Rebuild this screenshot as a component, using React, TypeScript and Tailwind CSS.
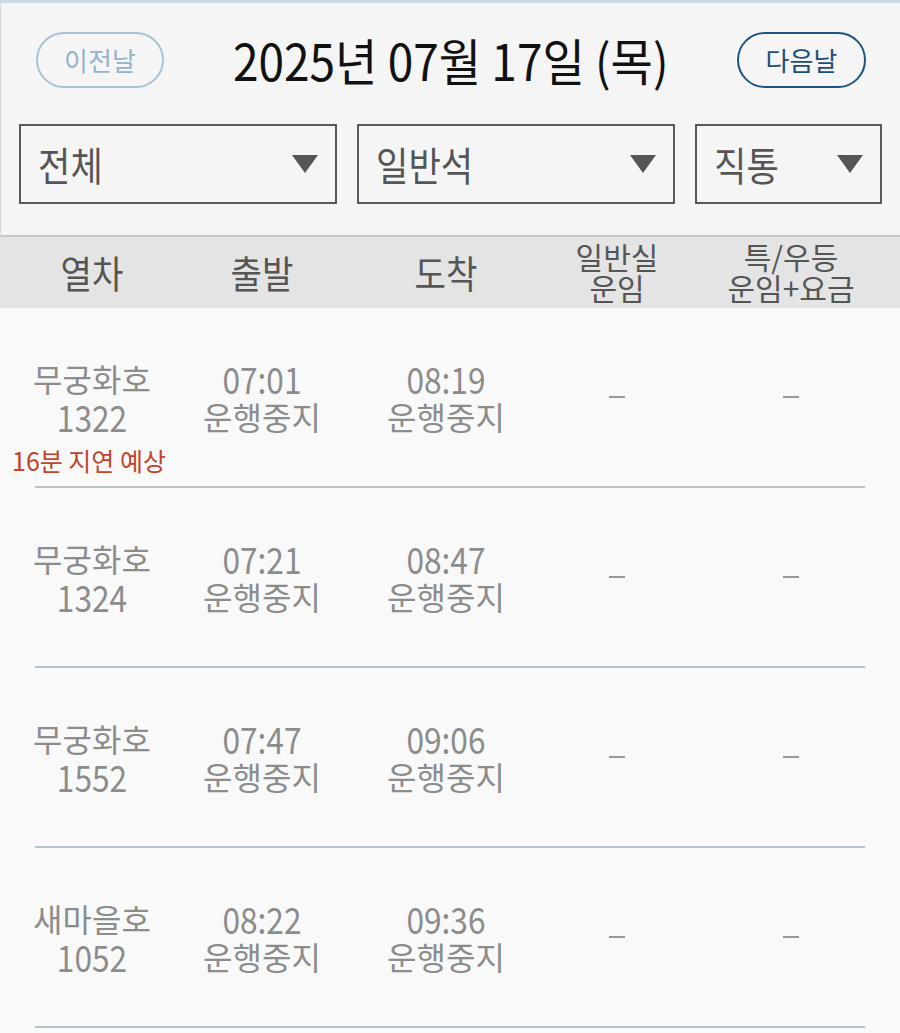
import React from "react";

type Train = {
  name: string;
  no: string;
  dep: string;
  arr: string;
  delay?: string;
};

const trains: Train[] = [
  { name: "무궁화호", no: "1322", dep: "07:01", arr: "08:19", delay: "16분 지연 예상" },
  { name: "무궁화호", no: "1324", dep: "07:21", arr: "08:47" },
  { name: "무궁화호", no: "1552", dep: "07:47", arr: "09:06" },
  { name: "새마을호", no: "1052", dep: "08:22", arr: "09:36" },
];

const font = { fontFamily: '"Noto Sans CJK KR", "Noto Sans", sans-serif' };

function Select({ label, width }: { label: string; width: string }) {
  return (
    <div
      className={`${width} h-[80px] border-2 border-[#5a5a5a] flex items-center justify-between pl-[17px] pr-[17px]`}
    >
      <span className="inline-block text-[40px] leading-none text-[#555] scale-x-[0.88] origin-left">
        {label}
      </span>
      <svg width="26" height="18" viewBox="0 0 26 18">
        <polygon points="0,0 26,0 13,18" fill="#555" />
      </svg>
    </div>
  );
}

function Dash() {
  return <div className="w-[16px] h-[2px] bg-[#9a9a9a]" />;
}

// digits in the reference are tall and narrow
function Num({ children }: { children: React.ReactNode }) {
  return <span className="inline-block text-[36px] scale-x-[0.88]">{children}</span>;
}

function Row({ t }: { t: Train }) {
  return (
    <div className="h-[180px] flex flex-col">
      <div className="flex-1 flex pt-[51px] text-[32px] leading-[38px] text-[#8c8c8c]">
        <div className="w-[184px] flex flex-col items-center">
          <span>{t.name}</span>
          <Num>{t.no}</Num>
          {t.delay && (
            <span className="self-start pl-[12px] mt-[12px] text-[25px] leading-[26px] text-[#c2432b]">
              {t.delay}
            </span>
          )}
        </div>
        <div className="w-[156px] flex flex-col items-center">
          <Num>{t.dep}</Num>
          <span>운행중지</span>
        </div>
        <div className="w-[212px] flex flex-col items-center">
          <Num>{t.arr}</Num>
          <span>운행중지</span>
        </div>
        <div className="w-[130px] h-[76px] flex items-center justify-center">
          <Dash />
        </div>
        <div className="w-[218px] h-[76px] flex items-center justify-center">
          <Dash />
        </div>
      </div>
      <div className="mx-[35px] h-[2px] bg-[#b5c3cf]" />
    </div>
  );
}

export default function App() {
  return (
    <div className="w-[900px] h-[1033px] overflow-hidden bg-[#f9f9f9]" style={font}>
      {/* Date + filters */}
      <div className="h-[237px] bg-[#f5f5f5] border-t-[3px] border-t-[#c9dae6] border-l border-l-[#d8d8d8] border-b-2 border-b-[#c8c8c8] pt-[29px]">
        <div className="flex items-center justify-between pl-[35px] pr-[34px]">
          <button className="w-[128px] h-[56px] rounded-full border-2 border-[#a6c3d8] text-[26px] leading-none text-[#94b4cc]">
            이전날
          </button>
          <span className="inline-block text-[50px] leading-none text-[#111] scale-x-[0.92] -mt-[3px]">
            2025년 07월 17일 (목)
          </span>
          <button className="w-[129px] h-[56px] rounded-full border-2 border-[#1f5480] text-[26px] leading-none text-[#1d4e78]">
            다음날
          </button>
        </div>
        <div className="flex gap-[20px] pl-[18px] mt-[36px]">
          <Select label="전체" width="w-[318px]" />
          <Select label="일반석" width="w-[318px]" />
          <Select label="직통" width="w-[187px]" />
        </div>
      </div>

      {/* Column header */}
      <div className="h-[71px] bg-[#e4e4e4] flex items-center text-[#555]">
        <div className="w-[184px] text-center">
          <span className="inline-block text-[38px] leading-none scale-x-[0.9]">열차</span>
        </div>
        <div className="w-[156px] text-center">
          <span className="inline-block text-[38px] leading-none scale-x-[0.9]">출발</span>
        </div>
        <div className="w-[212px] text-center">
          <span className="inline-block text-[38px] leading-none scale-x-[0.9]">도착</span>
        </div>
        <div className="w-[130px] flex flex-col items-center text-[30px] leading-[31px] -mt-[2px]">
          <span>일반실</span>
          <span>운임</span>
        </div>
        <div className="w-[218px] flex flex-col items-center text-[30px] leading-[31px] -mt-[2px]">
          <span>특/우등</span>
          <span>운임+요금</span>
        </div>
      </div>

      {/* Train list */}
      <div>
        {trains.map((t) => (
          <Row key={t.no} t={t} />
        ))}
      </div>
    </div>
  );
}
